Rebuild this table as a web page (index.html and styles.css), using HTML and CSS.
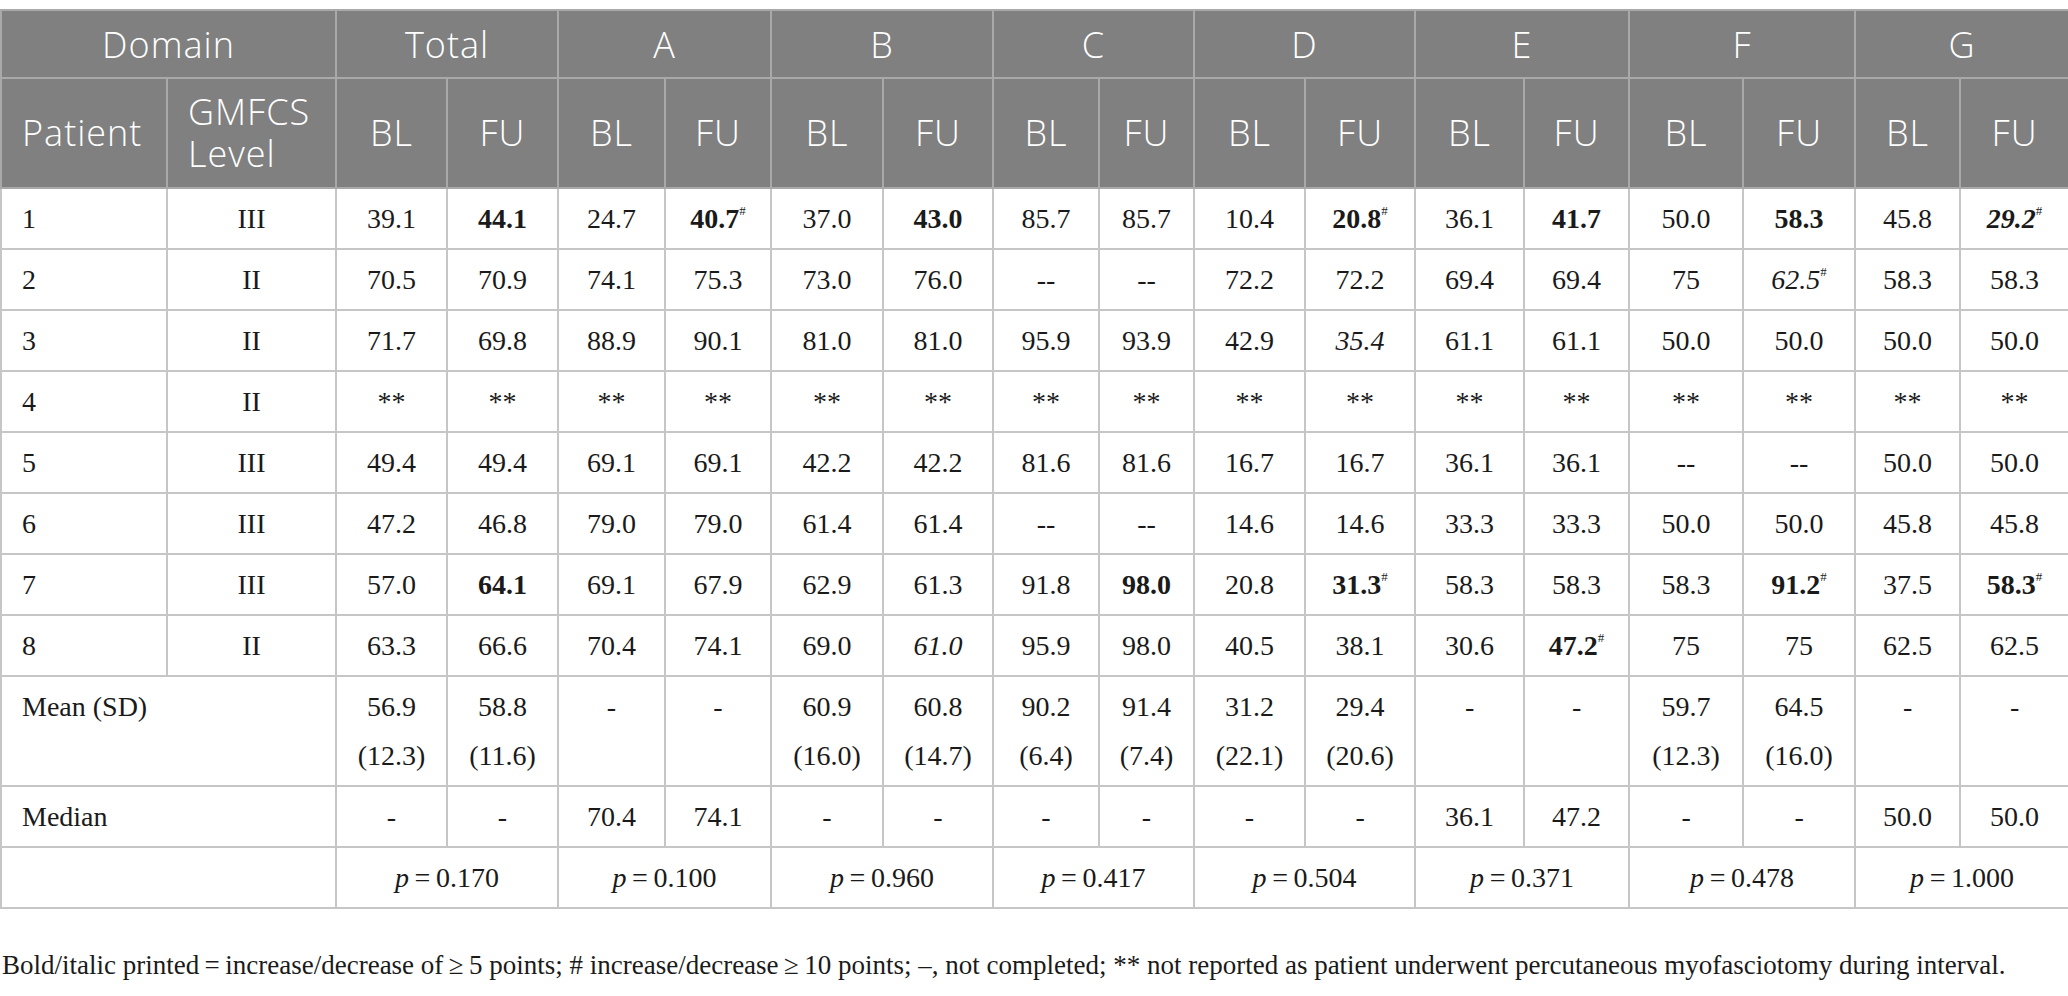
FILE: index.html
```html
<!DOCTYPE html>
<html lang="en">
<head>
    <meta charset="UTF-8">
    <title>GMFM scores by domain</title>
    <link rel="stylesheet" href="styles.css">
</head>
<body>

    <div class="page">
        <table class="score-table">
            <colgroup>
                <col style="width:166px"><col style="width:169px">
                <col style="width:111px"><col style="width:111px">
                <col style="width:107px"><col style="width:106px">
                <col style="width:112px"><col style="width:110px">
                <col style="width:106px"><col style="width:95px">
                <col style="width:111px"><col style="width:110px">
                <col style="width:109px"><col style="width:105px">
                <col style="width:114px"><col style="width:112px">
                <col style="width:105px"><col style="width:109px">
            </colgroup>
            <thead>
                <tr class="domain-row">
                    <th colspan="2">Domain</th>
                    <th colspan="2">Total</th>
                    <th colspan="2">A</th>
                    <th colspan="2">B</th>
                    <th colspan="2">C</th>
                    <th colspan="2">D</th>
                    <th colspan="2">E</th>
                    <th colspan="2">F</th>
                    <th colspan="2">G</th>
                </tr>
                <tr class="sub-row">
                    <th class="left">Patient</th>
                    <th class="left">GMFCS Level</th>
                    <th>BL</th><th>FU</th>
                    <th>BL</th><th>FU</th>
                    <th>BL</th><th>FU</th>
                    <th>BL</th><th>FU</th>
                    <th>BL</th><th>FU</th>
                    <th>BL</th><th>FU</th>
                    <th>BL</th><th>FU</th>
                    <th>BL</th><th>FU</th>
                </tr>
            </thead>
            <tbody>
                <tr>
                    <td class="label">1</td><td>III</td>
                    <td>39.1</td><td><b>44.1</b></td>
                    <td>24.7</td><td><b>40.7</b><sup>#</sup></td>
                    <td>37.0</td><td><b>43.0</b></td>
                    <td>85.7</td><td>85.7</td>
                    <td>10.4</td><td><b>20.8</b><sup>#</sup></td>
                    <td>36.1</td><td><b>41.7</b></td>
                    <td>50.0</td><td><b>58.3</b></td>
                    <td>45.8</td><td><b><i>29.2</i></b><sup>#</sup></td>
                </tr>
                <tr>
                    <td class="label">2</td><td>II</td>
                    <td>70.5</td><td>70.9</td>
                    <td>74.1</td><td>75.3</td>
                    <td>73.0</td><td>76.0</td>
                    <td>--</td><td>--</td>
                    <td>72.2</td><td>72.2</td>
                    <td>69.4</td><td>69.4</td>
                    <td>75</td><td><i>62.5</i><sup>#</sup></td>
                    <td>58.3</td><td>58.3</td>
                </tr>
                <tr>
                    <td class="label">3</td><td>II</td>
                    <td>71.7</td><td>69.8</td>
                    <td>88.9</td><td>90.1</td>
                    <td>81.0</td><td>81.0</td>
                    <td>95.9</td><td>93.9</td>
                    <td>42.9</td><td><i>35.4</i></td>
                    <td>61.1</td><td>61.1</td>
                    <td>50.0</td><td>50.0</td>
                    <td>50.0</td><td>50.0</td>
                </tr>
                <tr>
                    <td class="label">4</td><td>II</td>
                    <td>**</td><td>**</td>
                    <td>**</td><td>**</td>
                    <td>**</td><td>**</td>
                    <td>**</td><td>**</td>
                    <td>**</td><td>**</td>
                    <td>**</td><td>**</td>
                    <td>**</td><td>**</td>
                    <td>**</td><td>**</td>
                </tr>
                <tr>
                    <td class="label">5</td><td>III</td>
                    <td>49.4</td><td>49.4</td>
                    <td>69.1</td><td>69.1</td>
                    <td>42.2</td><td>42.2</td>
                    <td>81.6</td><td>81.6</td>
                    <td>16.7</td><td>16.7</td>
                    <td>36.1</td><td>36.1</td>
                    <td>--</td><td>--</td>
                    <td>50.0</td><td>50.0</td>
                </tr>
                <tr>
                    <td class="label">6</td><td>III</td>
                    <td>47.2</td><td>46.8</td>
                    <td>79.0</td><td>79.0</td>
                    <td>61.4</td><td>61.4</td>
                    <td>--</td><td>--</td>
                    <td>14.6</td><td>14.6</td>
                    <td>33.3</td><td>33.3</td>
                    <td>50.0</td><td>50.0</td>
                    <td>45.8</td><td>45.8</td>
                </tr>
                <tr>
                    <td class="label">7</td><td>III</td>
                    <td>57.0</td><td><b>64.1</b></td>
                    <td>69.1</td><td>67.9</td>
                    <td>62.9</td><td>61.3</td>
                    <td>91.8</td><td><b>98.0</b></td>
                    <td>20.8</td><td><b>31.3</b><sup>#</sup></td>
                    <td>58.3</td><td>58.3</td>
                    <td>58.3</td><td><b>91.2</b><sup>#</sup></td>
                    <td>37.5</td><td><b>58.3</b><sup>#</sup></td>
                </tr>
                <tr>
                    <td class="label">8</td><td>II</td>
                    <td>63.3</td><td>66.6</td>
                    <td>70.4</td><td>74.1</td>
                    <td>69.0</td><td><i>61.0</i></td>
                    <td>95.9</td><td>98.0</td>
                    <td>40.5</td><td>38.1</td>
                    <td>30.6</td><td><b>47.2</b><sup>#</sup></td>
                    <td>75</td><td>75</td>
                    <td>62.5</td><td>62.5</td>
                </tr>
                <tr class="mean-row">
                    <td class="label" colspan="2">Mean (SD)</td>
                    <td>56.9<br>(12.3)</td><td>58.8<br>(11.6)</td>
                    <td>-</td><td>-</td>
                    <td>60.9<br>(16.0)</td><td>60.8<br>(14.7)</td>
                    <td>90.2<br>(6.4)</td><td>91.4<br>(7.4)</td>
                    <td>31.2<br>(22.1)</td><td>29.4<br>(20.6)</td>
                    <td>-</td><td>-</td>
                    <td>59.7<br>(12.3)</td><td>64.5<br>(16.0)</td>
                    <td>-</td><td>-</td>
                </tr>
                <tr>
                    <td class="label" colspan="2">Median</td>
                    <td>-</td><td>-</td>
                    <td>70.4</td><td>74.1</td>
                    <td>-</td><td>-</td>
                    <td>-</td><td>-</td>
                    <td>-</td><td>-</td>
                    <td>36.1</td><td>47.2</td>
                    <td>-</td><td>-</td>
                    <td>50.0</td><td>50.0</td>
                </tr>
                <tr>
                    <td colspan="2"></td>
                    <td colspan="2"><i>p</i>&thinsp;=&thinsp;0.170</td>
                    <td colspan="2"><i>p</i>&thinsp;=&thinsp;0.100</td>
                    <td colspan="2"><i>p</i>&thinsp;=&thinsp;0.960</td>
                    <td colspan="2"><i>p</i>&thinsp;=&thinsp;0.417</td>
                    <td colspan="2"><i>p</i>&thinsp;=&thinsp;0.504</td>
                    <td colspan="2"><i>p</i>&thinsp;=&thinsp;0.371</td>
                    <td colspan="2"><i>p</i>&thinsp;=&thinsp;0.478</td>
                    <td colspan="2"><i>p</i>&thinsp;=&thinsp;1.000</td>
                </tr>
            </tbody>
        </table>

        <p class="note">Bold/italic printed&thinsp;=&thinsp;increase/decrease of&thinsp;≥&thinsp;5 points; # increase/decrease&thinsp;≥&thinsp;10 points; –, not completed; ** not reported as patient underwent percutaneous myofasciotomy during interval.</p>
    </div>

</body>
</html>
```

FILE: styles.css
```css
body {
    margin: 0;
    padding: 0;
    background: #ffffff;
    font-family: "Liberation Serif", "Times New Roman", serif;
    color: #1a1a1a;
}
.page {
    padding-top: 9px;
}
.score-table {
    width: 2068px;
    border-collapse: collapse;
    table-layout: fixed;
    border: 2px solid #c2c2c2;
}
.score-table th {
    background: #808080;
    color: #ffffff;
    font-family: "Open Sans", "Noto Sans", sans-serif;
    font-weight: 300;
    font-size: 36px;
    letter-spacing: 1px;
    text-align: center;
    border: 2px solid #a9a9a9;
    padding: 0 10px;
}
.score-table th.left {
    text-align: left;
    padding-left: 20px;
}
.domain-row th {
    height: 66px;
}
.sub-row th {
    height: 108px;
    line-height: 42px;
}
.score-table td {
    font-size: 28px;
    line-height: 49px;
    text-align: center;
    vertical-align: top;
    padding: 5px 4px;
    border: 2px solid #c6c6c6;
}
.score-table td.label {
    text-align: left;
    padding-left: 20px;
}
.score-table sup {
    font-size: 13px;
    line-height: 0;
    vertical-align: 13px;
}
.note {
    margin: 37px 0 0 2px;
    font-size: 27px;
    line-height: 38px;
    color: #1a1a1a;
}
```
